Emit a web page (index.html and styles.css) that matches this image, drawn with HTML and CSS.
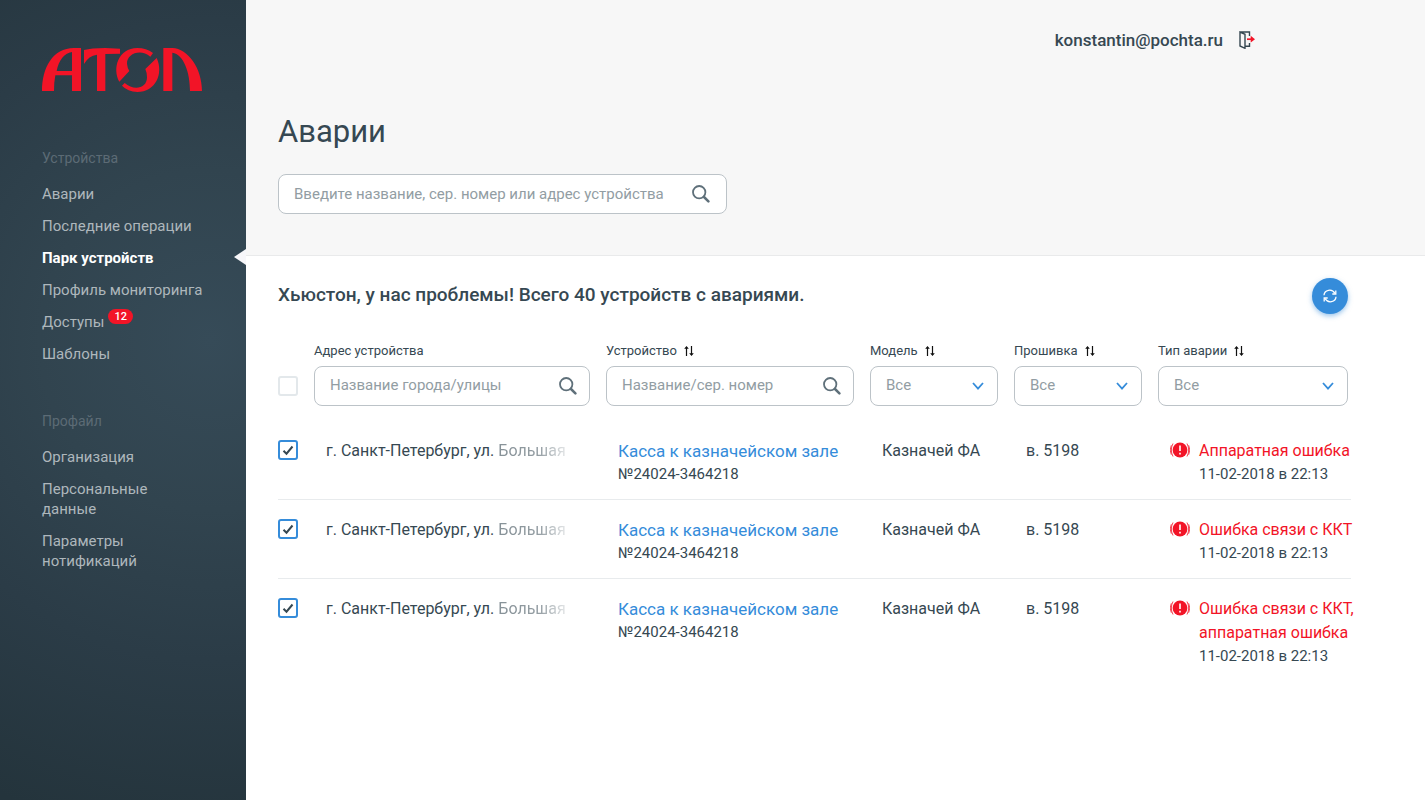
FILE: index.html
```html
<!DOCTYPE html>
<html lang="ru">
<head>
<meta charset="utf-8">
<meta name="viewport" content="width=device-width, initial-scale=1">
<title>Аварии</title>
<link rel="stylesheet" href="styles.css">
</head>
<body>
<svg class="sprite" aria-hidden="true">
  <symbol id="search" viewBox="0 0 18 18"><circle cx="7.2" cy="7.2" r="6.2" fill="none" stroke="currentColor" stroke-width="1.8"/><path d="M12 12l4.400 4.400" stroke="currentColor" stroke-width="2.500" stroke-linecap="round"/></symbol>
  <symbol id="chevron" viewBox="0 0 12 8"><path d="M1 1l5 5.6L11 1" fill="none" stroke="currentColor" stroke-width="1.800"/></symbol>
  <symbol id="sort" viewBox="0 0 12 12"><path d="M3.500 11V2M8.500 1V10" stroke="currentColor" stroke-width="1.200"/><path d="M1.200 3.800L3.500 1l2.300 2.800zM6.200 8.200l2.300 2.800 2.300-2.800z" fill="currentColor"/></symbol>
  <symbol id="alarm" viewBox="0 0 20 16"><circle cx="10" cy="8" r="7.400" fill="currentColor"/><path d="M3 1.500Q-.3 8 3 14.500M1.300 3.300Q-.9 8 1.300 12.700M17 1.500Q20.300 8 17 14.500M18.700 3.300Q20.900 8 18.700 12.700" fill="none" stroke="currentColor" stroke-width=".8"/><path d="M10 3.500v5.500M10 10.700v1.800" stroke="#fff" stroke-width="1.600"/></symbol>
</svg>
<div class="app">
  <aside class="sidebar">
    <a class="logo" href="#" aria-label="АТОЛ">
      <svg viewBox="0 0 480 132" width="160" height="44" fill="#f21427" aria-hidden="true">
        <path d="M0 129C0 60 32 0 96 0H117V129H90V82H40Q36 102 36 129ZM44 69H90V12C66 16 50 38 44 69Z" fill-rule="evenodd"/>
        <path d="M126 6Q148 0 190 0L234 2V17L190 18V129H165V20Q140 23 126 48Z"/>
        <path d="M232 101C210 62 228 0 286 0Q313 0 333 15L325 26C294 0 254 19 255 47Q256 59 262 69Z"/>
        <path d="M344 30C366 78 340 132 286 132Q257 131 240 113L248 105C274 129 315 123 315 88Q315 74 310 63Z"/>
        <path d="M364 0H391C438 2 480 61 480 129H444C444 72 425 19 391 14V129H364Z"/>
      </svg>
    </a>
    <nav class="group" aria-labelledby="nav-devices">
      <h2 class="group-title" id="nav-devices">Устройства</h2>
      <ul class="menu">
        <li><a href="#">Аварии</a></li>
        <li><a href="#">Последние операции</a></li>
        <li class="current"><a href="#" aria-current="page">Парк устройств</a></li>
        <li><a href="#">Профиль мониторинга</a></li>
        <li><a href="#">Доступы<span class="badge">12</span></a></li>
        <li><a href="#">Шаблоны</a></li>
      </ul>
    </nav>
    <nav class="group" aria-labelledby="nav-profile">
      <h2 class="group-title" id="nav-profile">Профайл</h2>
      <ul class="menu">
        <li><a href="#">Организация</a></li>
        <li><a href="#">Персональные<br>данные</a></li>
        <li><a href="#">Параметры<br>нотификаций</a></li>
      </ul>
    </nav>
  </aside>
  <main class="main">
    <header class="header">
      <div class="account">
        <a class="email" href="mailto:konstantin@pochta.ru">konstantin@pochta.ru</a>
        <button class="exit" type="button" aria-label="Выйти">
          <svg viewBox="0 0 16 18" width="16" height="18" aria-hidden="true" fill="none"><path d="M1 1H10.500V5M10.500 12V15.300H6.500M1 1V15L6 17.300V3.300Z" stroke="#364852" stroke-width="1.400"/><path d="M8 8.200h5" stroke="#f21427" stroke-width="1.700"/><path d="M11.700 4.800L16 8.200l-4.300 3.400z" fill="#f21427"/></svg>
        </button>
      </div>
      <h1 class="title">Аварии</h1>
      <div class="field search-main">
        <input type="text" aria-label="Поиск устройства" placeholder="Введите название, сер. номер или адрес устройства">
        <svg class="icon-search" width="18" height="18" aria-hidden="true"><use href="#search"/></svg>
      </div>
    </header>
    <section class="content">
      <div class="summary">
        <h2 class="summary-text">Хьюстон, у нас проблемы! Всего 40 устройств с авариями.</h2>
        <button class="refresh" type="button" aria-label="Обновить">
          <svg viewBox="0 0 14 14" width="14" height="14" aria-hidden="true" fill="none" stroke="#fff" stroke-width="1.300"><path d="M1 6.200C1.300 .8 9-.8 12 4.500M13 7.800C12.700 13.200 5 14.800 2 9.500"/><path d="M12.800 1.500V5H9.300M1.200 12.500V9h3.500"/></svg>
        </button>
      </div>
      <table class="table">
        <colgroup><col class="col-check"><col><col class="col-device"><col class="col-short"><col class="col-short"><col class="col-type"></colgroup>
        <thead>
          <tr>
            <th class="check-cell"><input class="check" type="checkbox" aria-label="Выбрать все"></th>
            <th>
              <div class="head"><label for="f-address">Адрес устройства</label></div>
              <div class="field"><input id="f-address" type="text" placeholder="Название города/улицы"><svg class="icon-search" width="18" height="18" aria-hidden="true"><use href="#search"/></svg></div>
            </th>
            <th>
              <div class="head"><label for="f-device">Устройство</label><button class="sort" type="button" aria-label="Сортировать"><svg width="12" height="12" aria-hidden="true"><use href="#sort"/></svg></button></div>
              <div class="field"><input id="f-device" type="text" placeholder="Название/сер. номер"><svg class="icon-search" width="18" height="18" aria-hidden="true"><use href="#search"/></svg></div>
            </th>
            <th>
              <div class="head"><label for="f-model">Модель</label><button class="sort" type="button" aria-label="Сортировать"><svg width="12" height="12" aria-hidden="true"><use href="#sort"/></svg></button></div>
              <div class="field"><select id="f-model"><option>Все</option></select><svg class="icon-chevron" width="12" height="8" aria-hidden="true"><use href="#chevron"/></svg></div>
            </th>
            <th>
              <div class="head"><label for="f-firmware">Прошивка</label><button class="sort" type="button" aria-label="Сортировать"><svg width="12" height="12" aria-hidden="true"><use href="#sort"/></svg></button></div>
              <div class="field"><select id="f-firmware"><option>Все</option></select><svg class="icon-chevron" width="12" height="8" aria-hidden="true"><use href="#chevron"/></svg></div>
            </th>
            <th class="type-head">
              <div class="head"><label for="f-type">Тип аварии</label><button class="sort" type="button" aria-label="Сортировать"><svg width="12" height="12" aria-hidden="true"><use href="#sort"/></svg></button></div>
              <div class="field"><select id="f-type"><option>Все</option></select><svg class="icon-chevron" width="12" height="8" aria-hidden="true"><use href="#chevron"/></svg></div>
            </th>
          </tr>
        </thead>
        <tbody>
          <tr>
            <td class="check-cell"><input class="check" type="checkbox" aria-label="Выбрать устройство" checked></td>
            <td>г. Санкт-Петербург, ул. <span class="fade">Большая</span></td>
            <td><a class="device" href="#">Касса к казначейском зале</a><div class="note">№24024-3464218</div></td>
            <td>Казначей ФА</td>
            <td>в. 5198</td>
            <td><div class="alarm"><svg class="icon-alarm" width="20" height="16" aria-hidden="true"><use href="#alarm"/></svg><div><div class="error">Аппаратная ошибка</div><div class="note">11-02-2018 в 22:13</div></div></div></td>
          </tr>
          <tr>
            <td class="check-cell"><input class="check" type="checkbox" aria-label="Выбрать устройство" checked></td>
            <td>г. Санкт-Петербург, ул. <span class="fade">Большая</span></td>
            <td><a class="device" href="#">Касса к казначейском зале</a><div class="note">№24024-3464218</div></td>
            <td>Казначей ФА</td>
            <td>в. 5198</td>
            <td><div class="alarm"><svg class="icon-alarm" width="20" height="16" aria-hidden="true"><use href="#alarm"/></svg><div><div class="error">Ошибка связи с ККТ</div><div class="note">11-02-2018 в 22:13</div></div></div></td>
          </tr>
          <tr>
            <td class="check-cell"><input class="check" type="checkbox" aria-label="Выбрать устройство" checked></td>
            <td>г. Санкт-Петербург, ул. <span class="fade">Большая</span></td>
            <td><a class="device" href="#">Касса к казначейском зале</a><div class="note">№24024-3464218</div></td>
            <td>Казначей ФА</td>
            <td>в. 5198</td>
            <td><div class="alarm"><svg class="icon-alarm" width="20" height="16" aria-hidden="true"><use href="#alarm"/></svg><div><div class="error">Ошибка связи с ККТ,<br>аппаратная ошибка</div><div class="note">11-02-2018 в 22:13</div></div></div></td>
          </tr>
        </tbody>
      </table>
    </section>
  </main>
</div>
</body>
</html>
```
FILE: styles.css
```css
* { box-sizing: border-box; }
body { margin: 0; font-family: Roboto, "Noto Sans", sans-serif; font-size: 16px; line-height: 24px; color: #364852; background: #fff; }
h1, h2, ul { margin: 0; padding: 0; font-weight: 400; }
ul { list-style: none; }
a { color: inherit; text-decoration: none; }
button { padding: 0; border: 0; background: none; color: inherit; cursor: pointer; }
svg { display: block; flex: none; }
.sprite { position: absolute; width: 0; height: 0; }

.app { display: flex; min-height: 100vh; }

.sidebar { flex: none; width: 246px; padding: 48px 0 48px 42px; background: radial-gradient(circle at 210px 340px, #364b58 0, #31444f 170px, #2b3c47 320px, #24343c 500px); color: #aeb7bc; font-size: 15px; line-height: 20px; }
.logo { display: block; width: 160px; }
.group { margin-top: 47px; }
.logo + .group { margin-top: 56px; }
.group-title { font-size: 14px; line-height: 20px; color: #5c6b75; }
.menu { display: flex; flex-direction: column; gap: 12px; margin-top: 16px; }
.menu li { position: relative; }
.current { color: #fff; font-weight: 700; }
.current::after { content: ""; position: absolute; right: 0; top: 1px; border: 8px solid transparent; border-left-width: 0; border-right: 12px solid #f7f7fa; }
.badge { position: absolute; top: -3px; margin-left: 4px; padding: 0 6px; border-radius: 8px; background: #f21427; color: #fff; font-size: 11px; font-weight: 500; line-height: 15px; }

.main { flex: 1; min-width: 0; }
.header { padding: 28px 32px 41px; background: #f7f7f7; border-bottom: 1px solid #e9eaeb; }
.account { display: flex; justify-content: flex-end; align-items: center; gap: 16px; padding-right: 138px; font-size: 17px; font-weight: 500; }
.title { margin-top: 60px; font-size: 31px; line-height: 40px; }
.search-main { max-width: 449px; margin-top: 22px; }

.field { display: grid; align-items: center; }
.field > * { grid-area: 1 / 1; }
.field input, .field select { width: 100%; height: 40px; padding: 0 48px 2px 15px; border: 1px solid #bcc3c8; border-radius: 8px; background: #fff; font: inherit; font-size: 15px; color: #929da3; appearance: none; }
.field input::placeholder { color: #929da3; opacity: 1; }
.search-main input { padding-bottom: 0; }
.icon-search { justify-self: end; margin-right: 13px; color: #5f707a; pointer-events: none; }
.search-main .icon-search { margin-right: 17px; }
.icon-chevron { justify-self: end; margin-right: 14px; color: #358cda; pointer-events: none; }

.content { padding: 22px 74px 48px 32px; }
.summary { display: flex; justify-content: space-between; align-items: center; padding-right: 3px; }
.summary-text { padding-bottom: 2px; font-size: 19px; font-weight: 500; line-height: 24px; }
.refresh { display: grid; place-items: center; width: 36px; height: 36px; border-radius: 50%; background: #358cda; box-shadow: 0 2px 5px #358cda80; }

.table { width: 100%; margin-top: 25px; border-collapse: separate; border-spacing: 0; table-layout: fixed; }
.col-check { width: 36px; }
.col-device { width: 264px; }
.col-short { width: 144px; }
.col-type { width: 193px; }
th { padding: 0 16px 15px 0; font-weight: 400; text-align: left; vertical-align: bottom; }
.type-head { padding-right: 3px; }
.head { display: flex; align-items: center; gap: 6px; height: 24px; margin-bottom: 3px; font-size: 13px; }
.sort { color: #111; }
td { padding: 18px 0 14px 12px; border-bottom: 1px solid #e8ebed; vertical-align: top; white-space: nowrap; }
tbody tr:last-child td { border-bottom: 0; }
td.check-cell { padding: 19px 0 0; }
th.check-cell { padding: 0 0 25px; }
.check { display: block; width: 20px; height: 20px; margin: 0; border: 2px solid #e3e8eb; border-radius: 3px; background: #fff; appearance: none; }
.check:checked { border-color: #358cda; background: #fff url("data:image/svg+xml,%3Csvg xmlns='http://www.w3.org/2000/svg' viewBox='0 0 16 16'%3E%3Cpath d='M3.500 8.700l3 3L12.500 4.500' fill='none' stroke='%23364852' stroke-width='2'/%3E%3C/svg%3E") center / 16px 16px no-repeat; }
.fade { -webkit-mask-image: linear-gradient(to right, #0009, #0008 60%, #0002); mask-image: linear-gradient(to right, #0009, #0008 60%, #0002); }
.device { display: block; font-size: 17px; color: #358cda; }
.note { font-size: 15px; line-height: 22px; }
.alarm { display: flex; gap: 9px; }
.icon-alarm { margin-top: 3px; color: #f21427; }
.error { color: #f21427; }
```
